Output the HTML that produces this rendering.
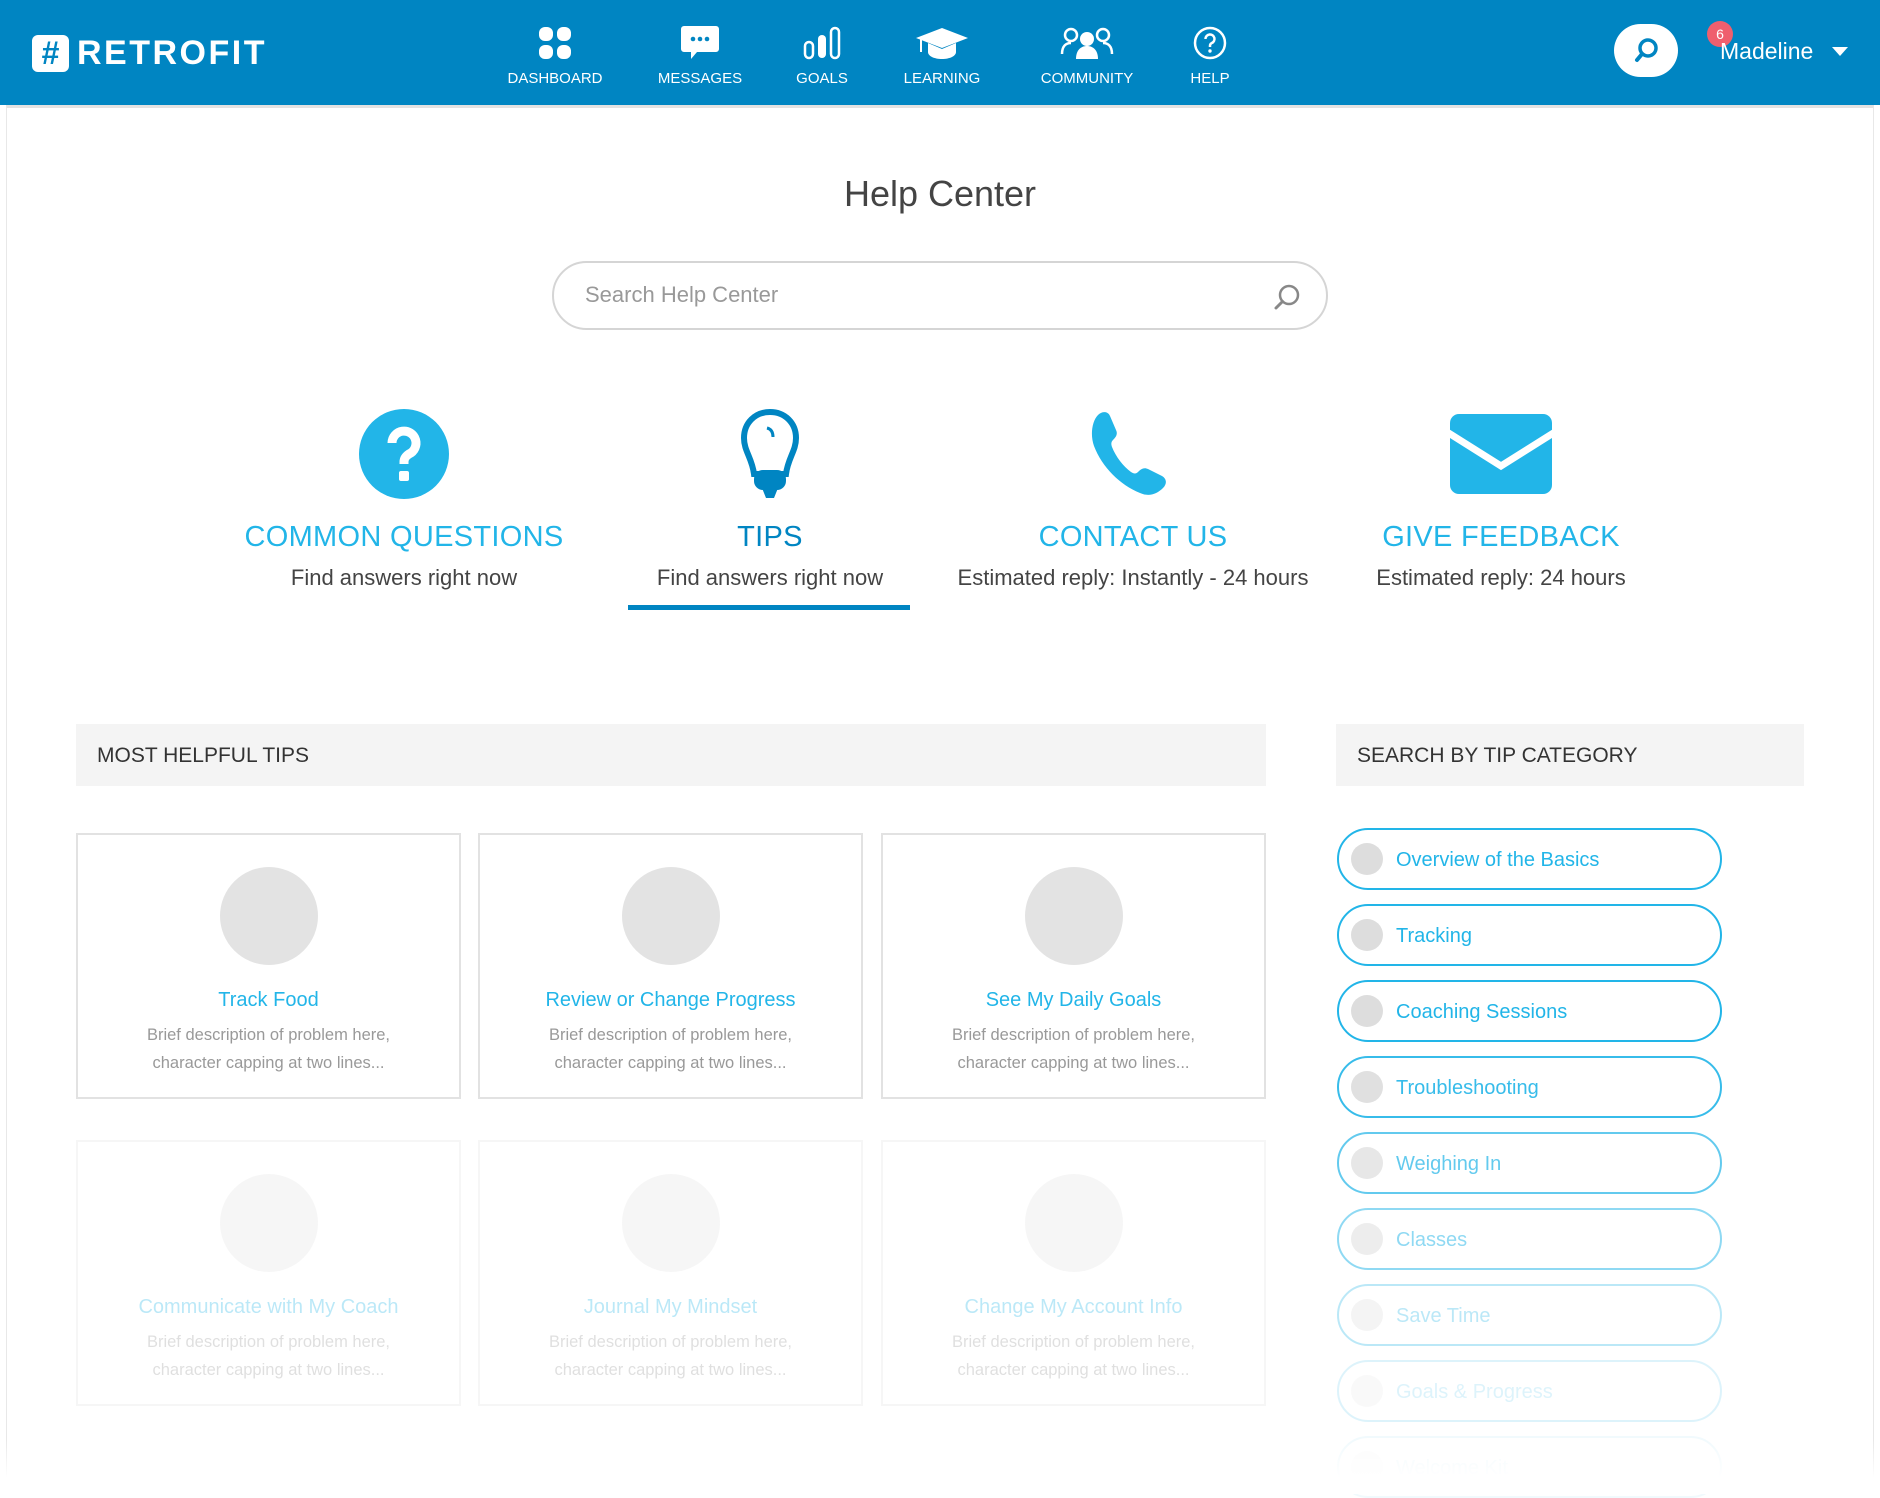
<!DOCTYPE html>
<html><head><meta charset="utf-8"><style>
*{box-sizing:border-box;margin:0;padding:0}
body{width:1880px;height:1494px;overflow:hidden;background:#fff;font-family:"Liberation Sans",sans-serif;position:relative}
.hdr{position:absolute;left:0;top:0;width:1880px;height:105px;background:#0085c2}
.logo{position:absolute;left:32px;top:34px;display:flex;align-items:center;color:#fff;font-weight:bold;font-size:34px;letter-spacing:2.5px}
.logo .hash{width:37px;height:37px;background:#fff;border-radius:6px;color:#0085c2;font-size:32px;display:flex;align-items:center;justify-content:center;margin-right:8px;letter-spacing:0}
.nav{position:absolute;top:24px;width:140px;margin-left:-70px;text-align:center;color:#fff;font-size:15px}
.nav svg{display:block;margin:0 auto 8px;height:38px}
.sbtn{position:absolute;left:1614px;top:24px;width:64px;height:53px;background:#fff;border-radius:27px}
.badge{position:absolute;left:1707px;top:21px;width:26px;height:26px;border-radius:50%;background:#ef5f6e;color:#fff;font-size:14px;text-align:center;line-height:26px}
.user{position:absolute;left:1720px;top:38px;color:#fff;font-size:23px}
.caret{position:absolute;left:1832px;top:47px;border-left:8px solid transparent;border-right:8px solid transparent;border-top:9px solid #fff}
.card{position:absolute;left:6px;top:105px;width:1868px;height:1389px;border-left:1px solid #e8e8e8;border-right:1px solid #e8e8e8;border-top:3px solid #e2e2e2}
h1{position:absolute;top:173px;width:100%;text-align:center;font-weight:normal;font-size:36px;color:#444}
.search{position:absolute;left:552px;top:261px;width:776px;height:69px;border:2px solid #d5d5d5;border-radius:35px;color:#999;font-size:22px;padding:19px 0 0 31px}
.cat{position:absolute;top:408px;width:420px;margin-left:-210px;text-align:center}
.cat .ic{height:92px;display:flex;justify-content:center;align-items:center}
.cat h2{margin-top:21px;font-size:29px;color:#22b5e8;font-weight:normal;letter-spacing:0.3px}
.cat p{margin-top:11px;font-size:22px;color:#444}
.uline{position:absolute;left:628px;top:605px;width:282px;height:5px;background:#0085c2}
.bar{position:absolute;top:724px;height:62px;background:#f4f4f4;color:#333;font-size:21px;padding:20px 0 0 21px}
.tc{position:absolute;width:385px;height:266px;border:2px solid #e2e2e2;text-align:center}
.tc .c{width:98px;height:98px;border-radius:50%;background:#e3e3e3;margin:32px auto 0}
.tc h3{font-weight:normal;color:#22b5e8;font-size:20px;margin-top:24px}
.tc p{color:#999;font-size:16.5px;line-height:28px;margin-top:9px}
.pill{position:absolute;left:1337px;width:385px;height:62px;border:2px solid #22b5e8;border-radius:31px;color:#22b5e8;font-size:20px;padding:19px 0 0 57px;background:#fff}
.pill:before{content:"";position:absolute;left:12px;top:13px;width:32px;height:32px;border-radius:50%;background:#ddd}
.fade{position:absolute;left:0;top:1440px;width:1880px;height:54px;background:linear-gradient(rgba(255,255,255,0),#fff 70%)}
</style></head><body>
<div class="hdr">
<div class="logo"><div class="hash">#</div>RETROFIT</div>
<div class="nav" style="left:555px"><svg viewBox="0 0 34 34" width="34"><rect x="1" y="1" width="14" height="14" rx="6" fill="#fff"/><rect x="19" y="1" width="14" height="14" rx="6" fill="#fff"/><rect x="1" y="19" width="14" height="14" rx="6" fill="#fff"/><rect x="19" y="19" width="14" height="14" rx="6" fill="#fff"/></svg>DASHBOARD</div>
<div class="nav" style="left:700px"><svg viewBox="0 0 40 36" width="40"><path d="M4 1h32a3 3 0 0 1 3 3v20a3 3 0 0 1-3 3H17l-6 7v-7H4a3 3 0 0 1-3-3V4a3 3 0 0 1 3-3z" fill="#fff"/><circle cx="13" cy="14" r="2.3" fill="#0085c2"/><circle cx="20" cy="14" r="2.3" fill="#0085c2"/><circle cx="27" cy="14" r="2.3" fill="#0085c2"/></svg>MESSAGES</div>
<div class="nav" style="left:822px"><svg viewBox="0 0 38 34" width="38"><rect x="2" y="16" width="8" height="16" rx="4" fill="none" stroke="#fff" stroke-width="2.5"/><rect x="15" y="9" width="8" height="23" rx="4" fill="#fff"/><rect x="28" y="2" width="8" height="30" rx="4" fill="none" stroke="#fff" stroke-width="2.5"/></svg>GOALS</div>
<div class="nav" style="left:942px"><svg viewBox="0 0 54 34" width="54"><path d="M27 2 53 12 27 22 1 12z" fill="#fff"/><path d="M13 17v9c0 4 6 7 14 7s14-3 14-7v-9l-14 6z" fill="#fff"/><path d="M6 13v13" stroke="#fff" stroke-width="2"/></svg>LEARNING</div>
<div class="nav" style="left:1087px"><svg viewBox="0 0 54 34" width="54"><g fill="none" stroke="#fff" stroke-width="2.5"><circle cx="11" cy="9" r="6"/><path d="M2 28c0-8 4-11 9-11"/><circle cx="43" cy="9" r="6"/><path d="M52 28c0-8-4-11-9-11"/></g><circle cx="27" cy="13" r="7" fill="#fff"/><path d="M16 33c0-9 5-13 11-13s11 4 11 13z" fill="#fff"/></svg>COMMUNITY</div>
<div class="nav" style="left:1210px"><svg viewBox="0 0 34 34" width="34"><circle cx="17" cy="17" r="15" fill="none" stroke="#fff" stroke-width="2.5"/><path d="M12.5 13a4.5 4.5 0 1 1 6 4.2c-1 .5-1.5 1.3-1.5 2.5v1.3" fill="none" stroke="#fff" stroke-width="2.5"/><circle cx="17" cy="25" r="1.7" fill="#fff"/></svg>HELP</div>
<div class="sbtn"><svg width="64" height="53" viewBox="0 0 64 53"><circle cx="34" cy="24" r="8" fill="none" stroke="#0085c2" stroke-width="3.5"/><path d="M28 30l-5 6" stroke="#0085c2" stroke-width="4" stroke-linecap="round"/></svg></div>
<div class="badge">6</div>
<div class="user">Madeline</div><div class="caret"></div>
</div>
<div class="card"></div>
<h1>Help Center</h1>
<div class="search">Search Help Center<svg style="position:absolute;right:24px;top:20px" width="30" height="30" viewBox="0 0 30 30"><circle cx="17" cy="12" r="9" fill="none" stroke="#888" stroke-width="2.5"/><path d="M10.5 18.5 4 25" stroke="#888" stroke-width="3" stroke-linecap="round"/></svg></div>

<div class="cat" style="left:404px"><div class="ic"><svg width="90" height="90" viewBox="0 0 90 90"><circle cx="45" cy="45" r="45" fill="#22b5e8"/><path d="M33 34a12 12 0 1 1 17 11c-3 2-5 4-5 8v2" fill="none" stroke="#fff" stroke-width="9"/><rect x="40" y="62" width="10" height="10" rx="2" fill="#fff"/></svg></div><h2>COMMON QUESTIONS</h2><p>Find answers right now</p></div>
<div class="cat" style="left:770px"><div class="ic"><svg width="62" height="92" viewBox="0 0 62 92"><path d="M31 4C16 4 5 15 5 30c0 13 8 20 10 36h32c2-16 10-23 10-36C57 15 46 4 31 4z" fill="none" stroke="#0085c2" stroke-width="6"/><path d="M28 20c4 1 6 4 6 9" fill="none" stroke="#0085c2" stroke-width="3"/><rect x="15" y="62" width="32" height="20" rx="9" fill="#0085c2"/><path d="M23 80h16l-4 10h-8z" fill="#0085c2"/></svg></div><h2 style="color:#0085c2">TIPS</h2><p>Find answers right now</p></div>
<div class="cat" style="left:1133px"><div class="ic"><svg width="86" height="86" viewBox="0 0 86 86"><path d="M8 4c4-4 10-4 12 1l6 14c2 4 0 7-3 10-2 2-2 4-1 7 4 10 11 19 19 25 3 2 5 2 7 0 3-3 6-5 10-3l14 7c5 3 5 8 1 12-6 6-14 9-23 5C30 74 12 56 4 35 0 24 2 10 8 4z" fill="#22b5e8"/></svg></div><h2>CONTACT US</h2><p>Estimated reply: Instantly - 24 hours</p></div>
<div class="cat" style="left:1501px"><div class="ic"><svg width="104" height="84" viewBox="0 0 104 84"><rect x="1" y="2" width="102" height="80" rx="9" fill="#22b5e8"/><path d="M-2 20 52 54 106 20" fill="none" stroke="#fff" stroke-width="7"/></svg></div><h2>GIVE FEEDBACK</h2><p>Estimated reply: 24 hours</p></div>
<div class="uline"></div>

<div class="bar" style="left:76px;width:1190px">MOST HELPFUL TIPS</div>
<div class="bar" style="left:1336px;width:468px">SEARCH BY TIP CATEGORY</div>

<div class="tc" style="left:76px;top:833px"><div class="c"></div><h3>Track Food</h3><p>Brief description of problem here,<br>character capping at two lines...</p></div>
<div class="tc" style="left:478px;top:833px"><div class="c"></div><h3>Review or Change Progress</h3><p>Brief description of problem here,<br>character capping at two lines...</p></div>
<div class="tc" style="left:881px;top:833px"><div class="c"></div><h3>See My Daily Goals</h3><p>Brief description of problem here,<br>character capping at two lines...</p></div>
<div style="opacity:.3">
<div class="tc" style="left:76px;top:1140px"><div class="c"></div><h3>Communicate with My Coach</h3><p>Brief description of problem here,<br>character capping at two lines...</p></div>
<div class="tc" style="left:478px;top:1140px"><div class="c"></div><h3>Journal My Mindset</h3><p>Brief description of problem here,<br>character capping at two lines...</p></div>
<div class="tc" style="left:881px;top:1140px"><div class="c"></div><h3>Change My Account Info</h3><p>Brief description of problem here,<br>character capping at two lines...</p></div>
</div>

<div class="pill" style="top:828px">Overview of the Basics</div>
<div class="pill" style="top:904px">Tracking</div>
<div class="pill" style="top:980px">Coaching Sessions</div>
<div class="pill" style="top:1056px;opacity:.9">Troubleshooting</div>
<div class="pill" style="top:1132px;opacity:.7">Weighing In</div>
<div class="pill" style="top:1208px;opacity:.5">Classes</div>
<div class="pill" style="top:1284px;opacity:.3">Save Time</div>
<div class="pill" style="top:1360px;opacity:.15">Goals &amp; Progress</div>
<div class="pill" style="top:1436px;opacity:.06">Welcome Kit</div>
<div class="fade"></div>
</body></html>
